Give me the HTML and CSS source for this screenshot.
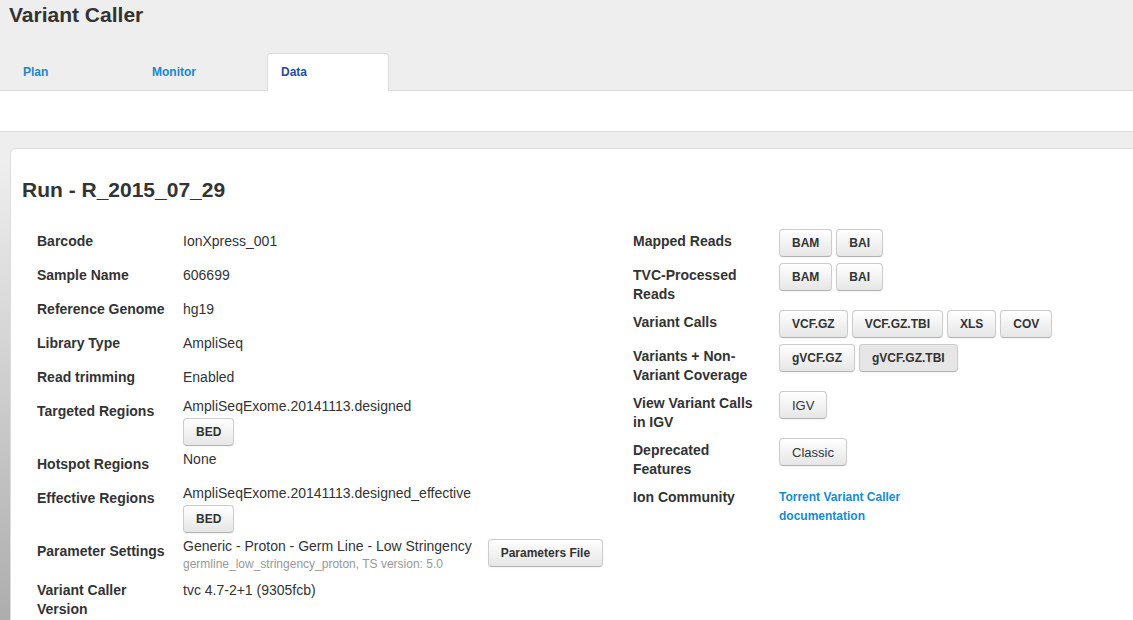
FILE: index.html
```html
<!DOCTYPE html>
<html lang="en">
<head>
    <meta charset="UTF-8">
    <meta name="viewport" content="width=device-width, initial-scale=1.0">
    <title>Variant Caller</title>
    <link rel="stylesheet" href="styles.css">
</head>
<body>
    <div class="header">
        <h1>Variant Caller</h1>
        <ul class="tabs">
            <li class="tab"><a href="#">Plan</a></li>
            <li class="tab"><a href="#">Monitor</a></li>
            <li class="tab active"><a href="#">Data</a></li>
        </ul>
    </div>
    <div class="subbar"></div>

    <div class="main">
        <div class="card">
            <h2>Run - R_2015_07_29</h2>

            <div class="columns">
                <div class="column">
                    <div class="row">
                        <div class="label">Barcode</div>
                        <div class="value padded">IonXpress_001</div>
                    </div>
                    <div class="row">
                        <div class="label">Sample Name</div>
                        <div class="value padded">606699</div>
                    </div>
                    <div class="row">
                        <div class="label">Reference Genome</div>
                        <div class="value padded">hg19</div>
                    </div>
                    <div class="row">
                        <div class="label">Library Type</div>
                        <div class="value padded">AmpliSeq</div>
                    </div>
                    <div class="row">
                        <div class="label">Read trimming</div>
                        <div class="value padded">Enabled</div>
                    </div>
                    <div class="row">
                        <div class="label">Targeted Regions</div>
                        <div class="value">
                            AmpliSeqExome.20141113.designed
                            <div class="buttons"><button class="button">BED</button></div>
                        </div>
                    </div>
                    <div class="row">
                        <div class="label">Hotspot Regions</div>
                        <div class="value">None</div>
                    </div>
                    <div class="row">
                        <div class="label">Effective Regions</div>
                        <div class="value">
                            AmpliSeqExome.20141113.designed_effective
                            <div class="buttons"><button class="button">BED</button></div>
                        </div>
                    </div>
                    <div class="row">
                        <div class="label">Parameter Settings</div>
                        <div class="value inline">
                            <div>
                                Generic - Proton - Germ Line - Low Stringency
                                <div class="small">germline_low_stringency_proton, TS version: 5.0</div>
                            </div>
                            <div class="buttons side"><button class="button">Parameters File</button></div>
                        </div>
                    </div>
                    <div class="row">
                        <div class="label">Variant Caller Version</div>
                        <div class="value padded">tvc 4.7-2+1 (9305fcb)</div>
                    </div>
                </div>

                <div class="column">
                    <div class="row">
                        <div class="label">Mapped Reads</div>
                        <div class="buttons">
                            <button class="button">BAM</button>
                            <button class="button">BAI</button>
                        </div>
                    </div>
                    <div class="row">
                        <div class="label">TVC-Processed Reads</div>
                        <div class="buttons">
                            <button class="button">BAM</button>
                            <button class="button">BAI</button>
                        </div>
                    </div>
                    <div class="row">
                        <div class="label">Variant Calls</div>
                        <div class="buttons">
                            <button class="button">VCF.GZ</button>
                            <button class="button">VCF.GZ.TBI</button>
                            <button class="button">XLS</button>
                            <button class="button">COV</button>
                        </div>
                    </div>
                    <div class="row">
                        <div class="label">Variants + Non-Variant Coverage</div>
                        <div class="buttons">
                            <button class="button">gVCF.GZ</button>
                            <button class="button hover">gVCF.GZ.TBI</button>
                        </div>
                    </div>
                    <div class="row">
                        <div class="label">View Variant Calls in IGV</div>
                        <div class="buttons">
                            <button class="button plain">IGV</button>
                        </div>
                    </div>
                    <div class="row">
                        <div class="label">Deprecated Features</div>
                        <div class="buttons">
                            <button class="button plain">Classic</button>
                        </div>
                    </div>
                    <div class="row">
                        <div class="label">Ion Community</div>
                        <div class="value padded">
                            <a class="doclink" href="#">Torrent Variant Caller documentation</a>
                        </div>
                    </div>
                </div>
            </div>
        </div>
    </div>
</body>
</html>
```

FILE: styles.css
```css
html, body {
    overflow: hidden;
}
body {
    margin: 0;
    font-family: "Liberation Sans", Arial, sans-serif;
    font-size: 14px;
    line-height: 19px;
    color: #333;
    background: #fff;
}
.header {
    background: #eee;
    border-bottom: 1px solid #ddd;
    height: 90px;
}
h1 {
    margin: 0;
    padding-left: 9px;
    font-size: 21px;
    line-height: 30px;
    font-weight: bold;
    color: #333;
}
.tabs {
    display: flex;
    list-style: none;
    margin: 23px 0 0 0;
    padding: 0 0 0 9px;
    height: 37px;
}
.tab {
    box-sizing: border-box;
    width: 122px;
    height: 37px;
    margin-right: 7px;
    padding-left: 13px;
    border: 1px solid transparent;
    border-bottom: none;
    border-radius: 4px 4px 0 0;
}
.tab a {
    font-size: 12px;
    font-weight: bold;
    line-height: 36px;
    color: #1888d0;
    text-decoration: none;
}
.tab.active {
    height: 38px;
    background: white;
    border-color: #ddd;
}
.tab.active a {
    color: #264c9a;
}
.subbar {
    height: 40px;
    background: white;
}
.main {
    border-top: 1px solid #e0e0e0;
    background: linear-gradient(to bottom, #eee 0, #eee 30px, #a8a8a8 100%);
    padding-top: 16px;
}
.card {
    box-sizing: border-box;
    width: 1240px;
    margin-left: 10px;
    padding: 26px 0 30px 11px;
    background: white;
    border: 1px solid #ddd;
    border-radius: 6px;
}
h2 {
    margin: 0 0 22px 0;
    font-size: 21px;
    line-height: 30px;
    font-weight: bold;
    color: #333;
}
.columns {
    display: grid;
    grid-template-columns: 596px 596px;
    margin-left: 15px;
}
.row {
    display: flex;
    align-items: flex-start;
    min-height: 30px;
    margin-bottom: 4px;
}
.label {
    box-sizing: border-box;
    flex: 0 0 146px;
    padding: 5px 15px 0 0;
    font-weight: bold;
}
.value.padded {
    padding-top: 5px;
}
.value.inline {
    display: flex;
    align-items: flex-start;
}
.small {
    font-size: 12px;
    line-height: 16px;
    color: #999;
}
.buttons {
    display: flex;
    gap: 4px;
    margin-top: 2px;
}
.buttons.side {
    margin-left: 16px;
}
.button {
    box-sizing: border-box;
    height: 28px;
    padding: 0 12px;
    font-family: "Liberation Sans", Arial, sans-serif;
    font-size: 12px;
    font-weight: bold;
    color: #333;
    background: linear-gradient(to bottom, #fff, #e6e6e6);
    border: 1px solid #ccc;
    border-bottom-color: #b3b3b3;
    border-radius: 4px;
    box-shadow: inset 0 1px 0 rgba(255,255,255,0.2), 0 1px 2px rgba(0,0,0,0.05);
    cursor: pointer;
}
.button.plain {
    font-size: 13px;
    font-weight: normal;
}
.button.hover {
    background: #e6e6e6;
}
.doclink {
    display: block;
    width: 140px;
    font-size: 12px;
    font-weight: bold;
    color: #168ccc;
    text-decoration: none;
}
```
